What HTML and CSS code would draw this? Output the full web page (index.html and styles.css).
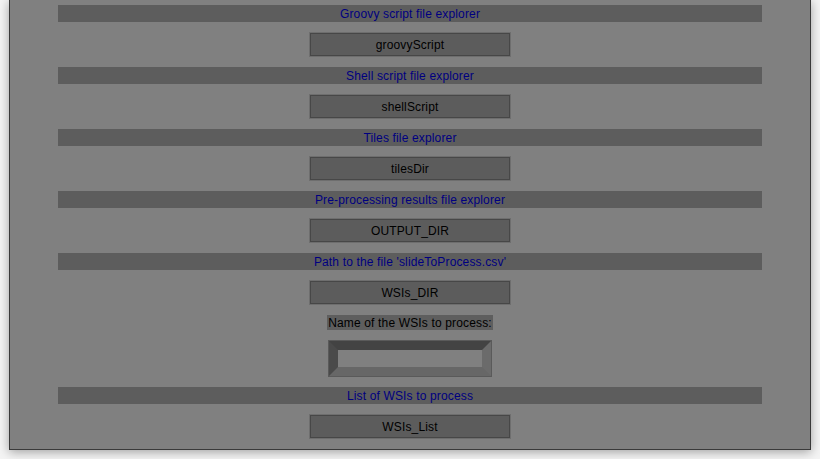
FILE: index.html
```html
<!DOCTYPE html>
<html>
<head>
<meta charset="utf-8">
<link rel="stylesheet" href="styles.css">
</head>
<body>
<div class="window">
  <div class="bar">Groovy script file explorer</div>
  <div class="btn">groovyScript</div>
  <div class="bar">Shell script file explorer</div>
  <div class="btn">shellScript</div>
  <div class="bar">Tiles file explorer</div>
  <div class="btn">tilesDir</div>
  <div class="bar">Pre-processing results file explorer</div>
  <div class="btn">OUTPUT_DIR</div>
  <div class="bar">Path to the file 'slideToProcess.csv'</div>
  <div class="btn">WSIs_DIR</div>
  <div class="label">Name of the WSIs to process:</div>
  <div class="field"><div class="field-inner"></div></div>
  <div class="bar">List of WSIs to process</div>
  <div class="btn">WSIs_List</div>
</div>
</body>
</html>
```

FILE: styles.css
```css
html, body {
  margin: 0;
  padding: 0;
  width: 820px;
  height: 459px;
  overflow: hidden;
  background: #f4f4f4;
  font-family: "Liberation Sans", Arial, sans-serif;
}

.window {
  box-sizing: border-box;
  margin-left: 9px;
  width: 802px;
  height: 450px;
  background: #808080;
  border: 1px solid #3a3a3a;
  border-top: none;
  box-shadow: 0 2px 10px rgba(0, 0, 0, 0.35);
  padding: 5px 48px 0 48px;
  display: flex;
  flex-direction: column;
  align-items: center;
  gap: 10px;
}

.bar {
  box-sizing: border-box;
  align-self: stretch;
  height: 17px;
  padding-top: 1px;
  background: #5d5d5d;
  color: #000080;
  font-size: 12px;
  letter-spacing: 0.15px;
  line-height: 17px;
  text-align: center;
}

.btn {
  box-sizing: border-box;
  width: 202px;
  height: 25px;
  padding-top: 1px;
  background: #5c5c5c;
  border: 1px solid #6e6e6e;
  box-shadow: inset 0 0 0 1px #474747;
  color: #000;
  font-size: 12px;
  letter-spacing: 0.15px;
  line-height: 22px;
  text-align: center;
}

.label {
  box-sizing: border-box;
  height: 15px;
  padding: 1px 1px 0;
  background: #5e5e5e;
  color: #000;
  font-size: 12px;
  letter-spacing: 0.15px;
  line-height: 14px;
}

.field {
  box-sizing: border-box;
  width: 164px;
  height: 37px;
  border: 10px solid;
  border-color: #434343 #6b6b6b #676767 #4a4a4a;
  outline: 1px solid #5a5a5a;
  outline-offset: -1px;
  background: #808080;
}
```
